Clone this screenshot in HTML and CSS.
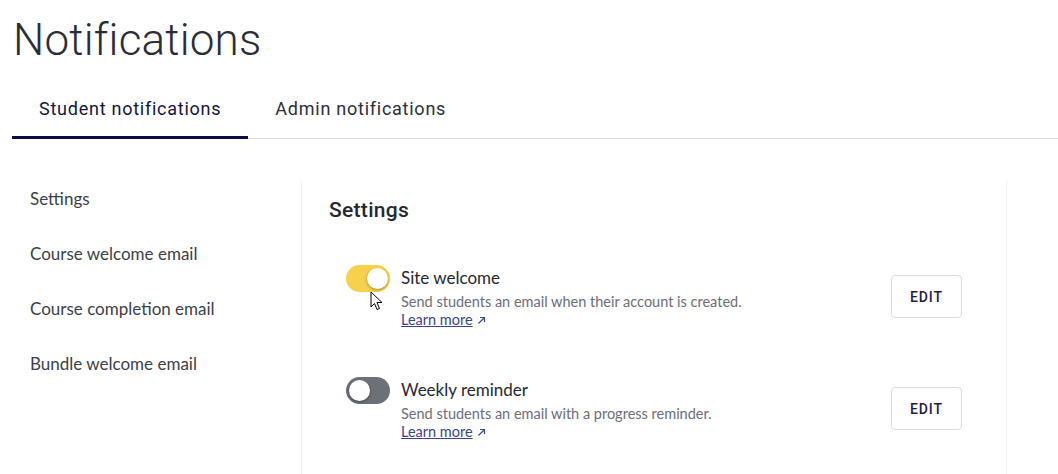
FILE: index.html
```html
<!DOCTYPE html>
<html>
<head>
<meta charset="utf-8">
<link rel="stylesheet" href="styles.css">
</head>
<body>
<h1 class="page-title">Notifications</h1>
<div class="tabs">
  <div class="tab active">Student notifications</div>
  <div class="tab">Admin notifications</div>
</div>
<div class="main">
  <nav class="sidenav">
    <div class="nav-item">Settings</div>
    <div class="nav-item">Course welcome email</div>
    <div class="nav-item">Course completion email</div>
    <div class="nav-item">Bundle welcome email</div>
  </nav>
  <section class="panel">
    <h2 class="panel-title">Settings</h2>
    <div class="setting">
      <div class="toggle on"><span class="knob"></span>
        <svg class="cursor" width="14" height="20" viewBox="0 0 14 20"><path d="M1 1 L1 16 L4.5 12.5 L7 18.5 L9.5 17.5 L7 11.5 L12 11.5 Z" fill="#fff" stroke="#000" stroke-width="1" stroke-linejoin="round"/></svg>
      </div>
      <div class="setting-text">
        <div class="setting-name">Site welcome</div>
        <div class="setting-desc">Send students an email when their account is created.</div>
        <div class="learn"><a class="learn-link">Learn more</a><svg class="ext" width="9" height="9" viewBox="0 0 9 9"><path d="M1.5 7.5 L7.5 1.5 M3 1.5 H7.5 V6" fill="none" stroke="#3d4486" stroke-width="1.2"/></svg></div>
      </div>
      <button class="edit">EDIT</button>
    </div>
    <div class="setting">
      <div class="toggle off"><span class="knob"></span></div>
      <div class="setting-text">
        <div class="setting-name">Weekly reminder</div>
        <div class="setting-desc">Send students an email with a progress reminder.</div>
        <div class="learn"><a class="learn-link">Learn more</a><svg class="ext" width="9" height="9" viewBox="0 0 9 9"><path d="M1.5 7.5 L7.5 1.5 M3 1.5 H7.5 V6" fill="none" stroke="#3d4486" stroke-width="1.2"/></svg></div>
      </div>
      <button class="edit">EDIT</button>
    </div>
  </section>
</div>
</body>
</html>
```
FILE: styles.css
```css
* { box-sizing: border-box; }
html, body { margin: 0; padding: 0; background: #fff; }
body { font-family: "Source Sans Pro", "Lato", "Open Sans", sans-serif; color: #2b2f36; overflow: hidden; height: 474px; }
.page-title {
  margin: 0;
  padding: 12px 0 0 13px;
  font-family: "Roboto", sans-serif;
  font-weight: 300;
  font-size: 44px;
  line-height: 56px;
  color: #2a2d34;
  letter-spacing: 0.2px;
}
.tabs {
  display: flex;
  margin: 20px 0 0 12px;
  border-bottom: 1px solid #dcdee2;
}
.tab {
  font-family: "Roboto", sans-serif;
  font-size: 18px;
  letter-spacing: 0.75px;
  color: #2b2e3a;
  padding: 10px 27px 16px 27px;
  line-height: 22px;
  border-bottom: 3px solid transparent;
  margin-bottom: -1px;
}
.tab.active { border-bottom-color: #0b0a4b; color: #14153b; }
.main { display: flex; margin-top: 42px; }
.sidenav { width: 301px; padding-left: 30px; padding-top: 6px; }
.nav-item { font-size: 17px; line-height: 24px; color: #3b3f47; margin-bottom: 31px; }
.panel {
  width: 706px;
  border-left: 1px solid #eef0f3;
  border-right: 1px solid #eef0f3;
  padding: 15px 44px 0 27px;
  height: 300px;
}
.panel-title {
  margin: 0 0 41px 0;
  font-family: "Roboto", sans-serif;
  font-weight: 500;
  font-size: 21px;
  line-height: 28px;
  letter-spacing: 0.3px;
  color: #25282f;
}
.setting { display: flex; align-items: flex-start; padding-left: 17px; margin-bottom: 49px; }
.toggle {
  position: relative;
  width: 44px; height: 27px;
  border-radius: 14px;
  flex: none;
}
.toggle.on { background: #f7d14c; }
.toggle.off { background: #6c7077; }
.knob {
  position: absolute;
  top: 3px;
  width: 21px; height: 21px;
  border-radius: 50%;
  background: #fff;
  box-shadow: 0 1px 3px rgba(0,0,0,0.35);
}
.toggle.on .knob { right: 2px; }
.toggle.off .knob { left: 3px; }
.cursor { position: absolute; left: 24px; top: 26px; }
.setting-text { flex: 1; padding-left: 11px; }
.setting-name { font-size: 17px; line-height: 22px; color: #26282f; margin-top: 2px; }
.setting-desc { font-size: 14.5px; line-height: 18px; color: #6b6e78; margin-top: 4px; }
.learn { font-size: 14.5px; line-height: 17px; color: #3d4486; }
.learn-link { text-decoration: underline; color: #3d4486; }
.ext { margin-left: 4px; }
.edit {
  flex: none;
  width: 71px; height: 43px;
  margin-top: 10px;
  background: #fff;
  border: 1px solid #d9dce1;
  border-radius: 4px;
  font-family: "Roboto", sans-serif;
  font-weight: 500;
  font-size: 14px;
  letter-spacing: 0.9px;
  color: #1c1d45;
}
```
